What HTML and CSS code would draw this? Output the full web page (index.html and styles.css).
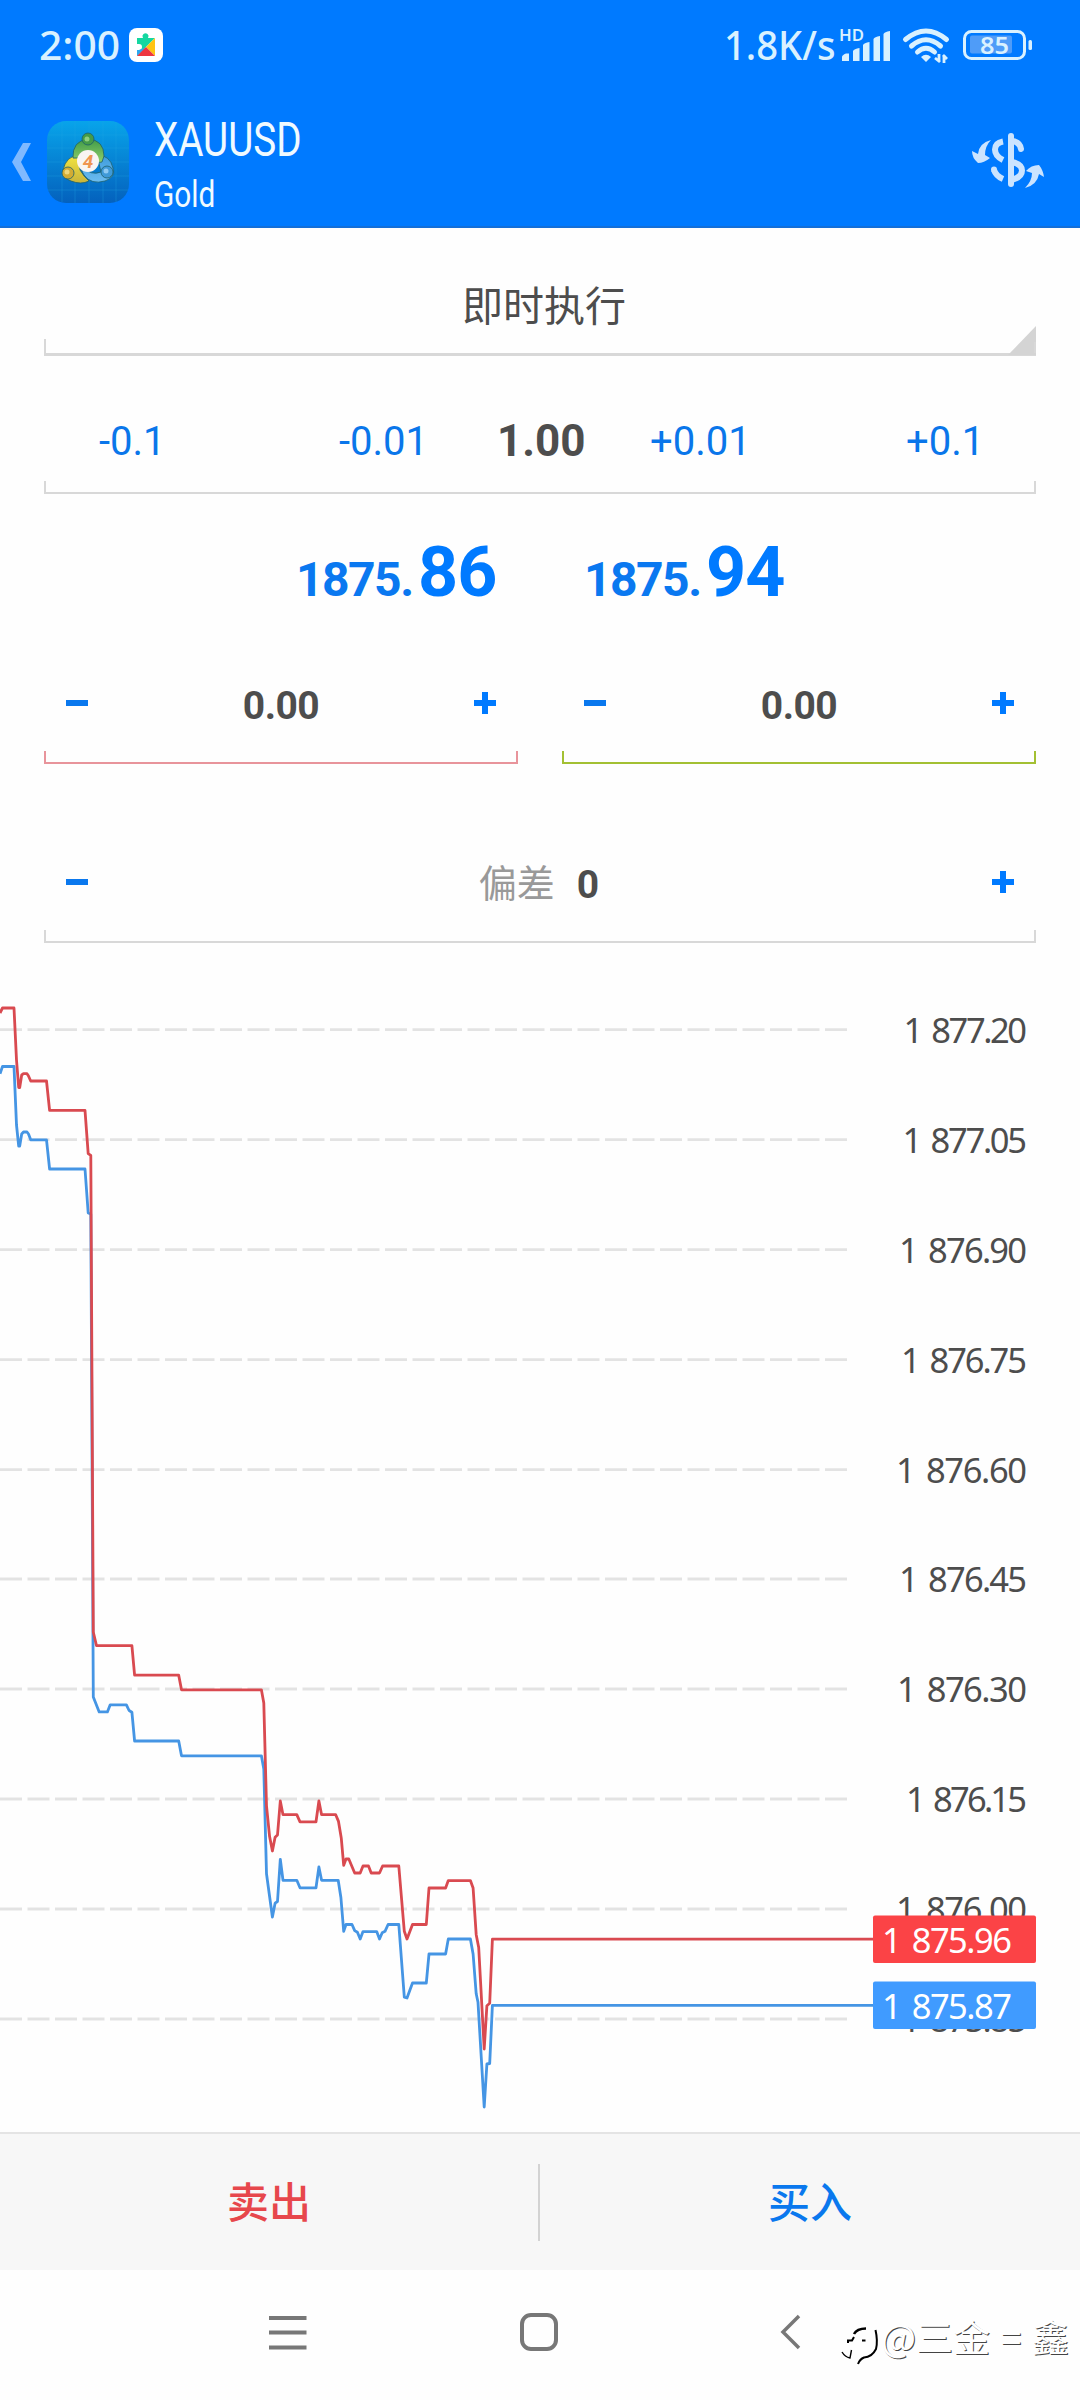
FILE: index.html
```html
<!DOCTYPE html>
<html lang="zh-CN">
<head>
<meta charset="utf-8">
<title>XAUUSD</title>
<link rel="stylesheet" href="styles.css">
</head>
<body>
<div class="screen">
  <header class="top">
    <div class="status">
      <span class="clock">2:00</span>
      <svg class="puzzle" width="34" height="34" viewBox="0 0 34 34">
        <rect width="34" height="34" rx="8" fill="#fff"/>
        <path d="M8 10h6a3 3 0 1 1 5 0h7L8 28v-6h2a3 3 0 0 0 0-6H8z" fill="#14d7a0"/>
        <path d="M8 28v-6h2a3 3 0 0 0 2-1l5 -1z" fill="#2aa8f0"/>
        <path d="M26 10v18l-9-9z" fill="#ffc412"/>
        <path d="M8 28l9-9 9 9z" fill="#ee3640"/>
      </svg>
      <span class="rate">1.8K/s</span>
      <svg class="signal" width="52" height="34" viewBox="0 0 52 34">
        <text class="hd" x="-1" y="13" textLength="25" lengthAdjust="spacingAndGlyphs">HD</text>
        <g fill="#d9f1ff">
          <path d="M2 33v-4q0-2 4-3.500h3V33z"/>
          <path d="M13 33v-10q1-2 6.500-3V33z"/>
          <path d="M23 33v-16q1-2 6.500-3V33z"/>
          <path d="M33.500 33v-22q1-2 6.500-3V33z"/>
          <path d="M43.500 33v-27q1-2 6.500-3V33z"/>
        </g>
      </svg>
      <svg class="wifi" width="48" height="36" viewBox="0 0 48 36">
        <g fill="none" stroke="#d9f1ff" stroke-width="5" stroke-linecap="round">
          <path d="M3.500 11.500Q24-5.500 44.500 11.500"/>
          <path d="M9.500 18Q24 5.500 38.500 18"/>
          <path d="M15.500 24Q24 16.500 32.500 24"/>
        </g>
        <path d="M24 34l-5-5q5-4.500 10 0z" fill="#d9f1ff"/>
        <path d="M37 26v8M38 34l-5-4M42 35v-8M41 27l4 4" fill="none" stroke="#d9f1ff" stroke-width="2.800"/>
      </svg>
      <svg class="battery" width="72" height="32" viewBox="0 0 72 32">
        <rect x="7" y="7.500" width="42" height="18" rx="2" fill="#4f9cf8"/>
        <rect x="1.500" y="3.500" width="60" height="27" rx="7" fill="none" stroke="#d9f1ff" stroke-width="3"/>
        <rect x="65.500" y="12" width="3.500" height="10" rx="1.500" fill="#d9f1ff"/>
        <text class="charge" x="17" y="25.500" textLength="29" lengthAdjust="spacingAndGlyphs">85</text>
      </svg>
    </div>
    <div class="bar">
      <svg class="back" width="20" height="40" viewBox="0 0 20 40"><path d="M11 1h8L9 20l10 19h-8L0 20z" fill="#7fb9ff"/></svg>
      <svg class="logo" width="84" height="84" viewBox="0 0 84 84">
        <defs>
          <linearGradient id="sky" x1="0" y1="0" x2="0" y2="1"><stop offset="0" stop-color="#08a4ea"/><stop offset="1" stop-color="#0461bd"/></linearGradient>
          <linearGradient id="leaf" x1="0" y1="0" x2="0" y2="1"><stop offset="0" stop-color="#3f9a48"/><stop offset="1" stop-color="#8fcf6a"/></linearGradient>
          <linearGradient id="sun" x1="0" y1="0" x2="0" y2="1"><stop offset="0" stop-color="#f3e540"/><stop offset="1" stop-color="#c9b43a"/></linearGradient>
          <linearGradient id="sea" x1="0" y1="0" x2="0" y2="1"><stop offset="0" stop-color="#3d9bdc"/><stop offset="1" stop-color="#6cbcf0"/></linearGradient>
        </defs>
        <rect x="0" y="1" width="82" height="82" rx="19" fill="url(#sky)"/>
        <path d="M15 2v80M28 1v82M42 1v82M56 1v82M69 2v80M1 15h80M0 28h82M0 42h82M0 56h82M1 70h80" stroke="#25a5e6" stroke-opacity=".3" fill="none"/>
        <g stroke="#1d5f6c" stroke-width=".8">
          <path d="M32 35Q19 36 16 50Q15 58 24 61Q34 65 42 61Q37 57 33 50Z" fill="url(#sun)"/>
          <path d="M50 35Q63 35 66 48Q69 57 58 61Q44 65 37 55Q33 49 36 47Q44 56 54 52Z" fill="url(#sea)"/>
          <path d="M26 38Q25 21 41 19Q57 20 57 36L55 42Q50 44 49 36Q41 26 33 36Q31 39 26 38z" fill="url(#leaf)"/>
          <circle cx="41" cy="19" r="6" fill="#459b48"/>
          <circle cx="21" cy="53" r="6" fill="#d3ac33"/>
          <circle cx="60" cy="52" r="6" fill="#3f9ad8"/>
        </g>
        <circle cx="40" cy="19" r="2.500" fill="#8fce7e"/>
        <circle cx="20" cy="52" r="2.500" fill="#eed67a"/>
        <circle cx="59" cy="51" r="2.500" fill="#8ecaf3"/>
        <circle cx="41" cy="41" r="11" fill="#f9f5f1"/>
        <text class="four" x="41" y="48" text-anchor="middle">4</text>
      </svg>
      <div class="names">
        <div class="symbol">XAUUSD</div>
        <div class="desc">Gold</div>
      </div>
      <svg class="swap" width="74" height="58" viewBox="0 0 74 58">
        <g fill="none" stroke="#cbe4ff" stroke-width="6">
          <path d="M41 5v48" stroke-linecap="round"/>
          <path d="M33 10.500Q25 12 25 18.500Q25 25 33 29"/>
          <path d="M42 10Q50 11 51 18" stroke-linecap="round"/>
          <path d="M42 31Q52 33 52 39.500Q52 46 42 49"/>
          <path d="M24 39Q26 45 33 48"/>
        </g>
        <circle cx="24" cy="38.500" r="3" fill="#cbe4ff"/>
        <path d="M21 9Q9 12 8 23L2 20Q2 27 8 32Q14 32 20 27L15 24Q15 15 21 9z" fill="#cbe4ff"/>
        <path d="M55 57Q67 54 69 43L74 46Q73 39 69 34Q61 34 56 40L62 42Q62 50 55 57z" fill="#cbe4ff"/>
      </svg>
    </div>
  </header>

  <main class="form">
    <div class="field mode">即时执行<svg class="corner" width="28" height="29" viewBox="0 0 28 29"><path d="M28 0v29H0z" fill="#d4d4d4"/></svg></div>
    <div class="field lots">
      <span class="lot l1">-0.1</span><span class="lot l2">-0.01</span><b class="volume">1.00</b><span class="lot l3">+0.01</span><span class="lot l4">+0.1</span>
    </div>
    <div class="quotes">
      <div class="quote bid"><span class="whole">1875.</span><span class="pips">86</span></div>
      <div class="quote ask"><span class="whole">1875.</span><span class="pips">94</span></div>
    </div>
    <div class="stops">
      <div class="field stepper sl"><i class="minus"></i><b>0.00</b><i class="plus"></i></div>
      <div class="field stepper tp"><i class="minus"></i><b>0.00</b><i class="plus"></i></div>
    </div>
    <div class="field stepper deviation"><i class="minus"></i><span class="dev"><span class="hint">偏差</span><b>0</b></span><i class="plus"></i></div>
  </main>

  <svg class="chart" width="1080" height="1180" viewBox="0 952 1080 1180">
    <g class="grid">
      <path d="M0 1029.700H847M0 1139.700H847M0 1249.700H847M0 1359.700H847M0 1469.700H847M0 1579H847M0 1689H847M0 1799H847M0 1909H847M0 2019H847"/>
    </g>
    <g class="scale">
      <text x="903.500" y="1043" textLength="123.500">1 877.20</text>
      <text x="902.500" y="1153" textLength="124.500">1 877.05</text>
      <text x="899" y="1263" textLength="128">1 876.90</text>
      <text x="901" y="1373" textLength="126">1 876.75</text>
      <text x="896" y="1483" textLength="131">1 876.60</text>
      <text x="899" y="1592" textLength="128">1 876.45</text>
      <text x="897" y="1702" textLength="130">1 876.30</text>
      <text x="906" y="1812" textLength="121">1 876.15</text>
      <text x="896" y="1922" textLength="131">1 876.00</text>
      <text x="901" y="2032" textLength="126">1 875.85</text>
    </g>
    <polyline class="line bid-line" points="0,1073.7 2.5,1066.5 14,1066.5 16.5,1125 18.7,1146 19.7,1146 21.7,1134 23.5,1132 27,1132 28.500,1134 30.7,1139.8 46.5,1139.8 49.6,1169 85,1169 88.2,1213 90.8,1214 93.3,1697 99.2,1711.9 107.4,1711.9 110.2,1704.8 126.4,1704.8 129.1,1710.5 131.9,1712.2 134.6,1741 178.7,1741 181.5,1755.8 261.4,1755.8 263.8,1769 266.5,1873.8 272.4,1917 275.1,1903.2 277.5,1901.5 280.3,1859.3 283,1880.3 296.8,1880.3 300,1887.8 316,1887.8 318.9,1867 321.6,1880.3 338.2,1880.3 340.9,1897.5 343.7,1931.3 346,1924.5 352,1924.5 354.7,1930.6 357.4,1932.3 360.2,1939 363,1931.6 376.7,1931.6 379.5,1939 382.2,1932.7 385,1931.3 388.1,1924.5 398.8,1924.5 404.3,1997.2 407,1998 412.5,1983 426.3,1983 429,1954 445.6,1954 448.3,1939 470.4,1939 473.1,1954 476.2,1993.8 478,2002.3 484.2,2107 486.9,2064 489.7,2063.5 492.4,2005.4 873,2005.4"/>
    <polyline class="line ask-line" points="0,1013 2.5,1008 14,1008 16.5,1060 18.7,1087.5 19.7,1087.5 21.7,1075 23.5,1073.7 27,1073.7 28.5,1076 30.7,1081 46.5,1081 49.6,1110.4 85,1110.4 88.2,1153.6 90.8,1155.4 93.3,1632 96.5,1645.7 131.9,1645.7 134.6,1675.2 178.7,1675.2 181.5,1689.8 261.4,1689.8 263.8,1703 266.5,1806 269.6,1836.6 272.4,1851 275.1,1837.3 277.5,1835 280.3,1801 283,1814.7 296.8,1814.7 300,1821.8 316,1821.8 318.9,1801 321.6,1814.7 335.7,1814.7 338.5,1821.4 341.3,1838.3 343.7,1865.4 346,1859 348.8,1859 354.7,1873 360.2,1873 363,1866 368.5,1866 371.2,1873 379.5,1873 382.6,1866 398.8,1866 404.3,1931.3 407,1939 412.5,1924.5 426.3,1924.5 429,1888 445.6,1888 448.3,1880.6 470.4,1880.6 473.1,1888 476.2,1934.7 478.7,1947.5 484.2,2049 486.9,2005.7 489.7,2003.3 492.4,1939.2 873,1939.2"/>
    <rect x="873" y="1915.500" width="163" height="47.500" rx="2" fill="#fb4346"/>
    <rect x="873" y="1981.500" width="163" height="47.500" rx="2" fill="#409bff"/>
    <g class="tags">
      <text x="882" y="1952.500" textLength="130">1 875.96</text>
      <text x="882" y="2018.500" textLength="130">1 875.87</text>
    </g>
  </svg>

  <div class="actions">
    <div class="sell">卖出</div>
    <div class="buy">买入</div>
  </div>

  <nav class="nav">
    <svg class="menu" width="38" height="36" viewBox="0 0 38 36"><path d="M0 3h37.500M0 17.500h37.500M0 32.500h37.500" stroke="#777" stroke-width="4"/></svg>
    <svg class="home" width="40" height="40" viewBox="0 0 40 40"><rect x="3" y="3" width="34" height="34" rx="9" fill="none" stroke="#777" stroke-width="4"/></svg>
    <svg class="prev" width="22" height="38" viewBox="0 0 22 38"><path d="M19 3L3 19l16 16" fill="none" stroke="#777" stroke-width="3.500"/></svg>
    <div class="watermark">
      <svg width="40" height="44" viewBox="0 0 40 44">
        <g fill="none" stroke="#000">
          <path d="M13 13Q16 7.500 25 7.500" stroke-width="2.600"/>
          <path d="M7 22v-2.500h4l2-3.500M21 19.500h3.500" stroke-width="2"/>
          <path d="M34.500 9Q37 20 35 28Q31 36 23 36.500Q19 38 17 43" stroke-width="2"/>
          <path d="M1 31Q4 36 9 37L10.500 29" stroke-width="1.400"/>
        </g>
      </svg>
      <span>@三金<em>=</em>鑫</span>
    </div>
  </nav>
</div>
</body>
</html>
```

FILE: styles.css
```css
* { box-sizing: border-box; }
body { margin: 0; background: #fefefe; }
.screen {
  width: 1080px; height: 2400px; overflow: hidden;
  display: flex; flex-direction: column;
  font-family: Roboto, "Noto Sans CJK SC", sans-serif;
  color: #4d4d4d;
}
svg { display: block; flex: none; overflow: visible; }
i, em { font-style: normal; }

/* header */
.top { height: 228px; background: #007aff; border-bottom: 2px solid #146fd8; }
.status { height: 92px; display: flex; align-items: flex-start; padding-top: 28px; color: #d9f1ff; }
.clock, .rate { font: 500 40px/34px "Noto Sans", sans-serif; transform-origin: 0 50%; white-space: nowrap; }
.clock { width: 90px; margin-left: 39px; transform: scaleX(1.02); }
.rate { width: 115px; margin-left: 561px; transform: scaleX(.955); }
.signal { margin-left: 1px; }
.hd { font: 600 16px "Noto Sans", sans-serif; fill: #d9f1ff; }
.wifi { margin-left: 10px; }
.battery { margin-left: 13px; }
.charge { font: 600 24px "Noto Sans", sans-serif; fill: #d9f1ff; }
.bar { display: flex; align-items: flex-start; height: 134px; }
.back { margin: 50px 0 0 12px; }
.logo { margin: 28px 0 0 15px; }
.four { font: italic 700 19px Roboto, sans-serif; fill: #ef9650; }
.names { margin: 20px 0 0 23px; width: 400px; color: #f0faff; transform: scaleX(.805); transform-origin: 0 0; }
.symbol { font-size: 48px; line-height: 56px; }
.desc { font-size: 37px; line-height: 42px; margin-top: 6px; }
.swap { margin: 39px 0 0 416px; }

/* order form */
.form { height: 724px; padding: 0 44px; }
.field { position: relative; border-bottom: 2px solid #d8d8d8; }
.field::before, .field::after {
  content: ""; position: absolute; bottom: 0; width: 2px; height: 11px; background: #d8d8d8;
}
.field::before { left: 0; }
.field::after { right: 0; }
.mode { height: 128px; border-bottom-width: 3px; padding: 49px 0 0 8px; text-align: center; font-size: 41px; line-height: 60px; }
.mode::before { height: 14px; }
.corner { position: absolute; right: 0; bottom: -2px; }
.lots { height: 138px; display: flex; padding: 62px 0 0; font-size: 40px; line-height: 47px; color: #0a76ea; white-space: nowrap; }
.l1 { margin-left: 55px; width: 240px; }
.l2 { width: 158px; }
.volume { width: 153px; font-size: 44px; color: #4d4d4d; }
.l3 { width: 256px; }
.quotes { display: flex; height: 151px; padding: 37px 0 0 252px; color: #0a78f0; }
.quote { display: flex; align-items: baseline; width: 288px; height: 84px; font-weight: 700; line-height: 82px; }
.whole { font-size: 48px; width: 122px; letter-spacing: -1.500px; }
.pips { font-size: 70px; color: #007aff; letter-spacing: -1px; }
.stops { display: flex; gap: 44px; height: 119px; }
.stepper { display: flex; justify-content: space-between; align-items: flex-start; padding: 46px 22px 0; flex: 1; font-size: 39px; line-height: 46px; }
.sl { border-color: #e8949b; }
.sl::before, .sl::after { background: #e8949b; }
.tp { border-color: #a3c033; }
.tp::before, .tp::after { background: #a3c033; }
.minus, .plus { width: 22px; height: 22px; margin-top: 1px; background: linear-gradient(#0a78ee, #0a78ee) 0 50% / 22px 6px no-repeat; }
.plus { background: linear-gradient(#007aff, #007aff) 0 50% / 22px 6px no-repeat, linear-gradient(#007aff, #007aff) 50% 0 / 6px 22px no-repeat; }
.stops b { margin-top: -8px; letter-spacing: -.500px; }
.deviation { height: 179px; padding-top: 106px; }
.dev { display: flex; gap: 22px; margin: -8px 2px 0 0; }
.hint { color: #999; font-size: 38px; margin-top: -1px; }

/* tick chart */
.grid path { stroke: #e3e3e3; stroke-width: 2.800; stroke-dasharray: 22 5.500; }
.scale text, .tags text { font: 400 34.500px "Noto Sans", sans-serif; fill: #4d4d4d; word-spacing: 4px; }
.tags text { fill: #fff; }
.line { fill: none; stroke-width: 2.800; stroke-linejoin: round; }
.bid-line { stroke: #4595e4; }
.ask-line { stroke: #d94a50; }

/* trade buttons */
.actions { height: 138px; border-top: 2px solid #e4e4e4; background: #f7f7f7; display: flex; align-items: center; font-size: 42px; font-weight: 500; text-align: center; }
.sell, .buy { width: 540px; height: 77px; line-height: 79px; }
.sell { color: #e7474c; border-right: 2px solid #d3d3d3; }
.buy { color: #0a78ee; }

/* system navigation */
.nav { height: 130px; display: flex; align-items: flex-start; }
.menu { margin: 45px 0 0 269px; }
.home { margin: 42px 0 0 212px; }
.prev { margin: 43px 0 0 221px; }
.watermark { display: flex; margin: 51px 0 0 39px; white-space: nowrap; }
.watermark span { font: 400 37px/40px "Noto Sans CJK SC", sans-serif; color: #fff; text-shadow: 1px 1px 0 #444; margin-top: -5px; }
.watermark em { display: inline-block; width: 42px; text-align: center; }
```
